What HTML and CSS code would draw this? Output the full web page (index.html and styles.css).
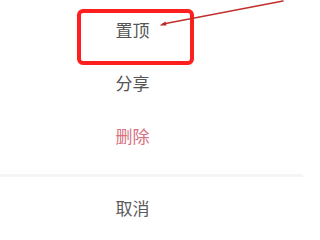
FILE: index.html
```html
<!DOCTYPE html>
<html lang="zh">
<head>
<meta charset="utf-8">
<link rel="stylesheet" href="styles.css">
</head>
<body>
<div class="sheet">
  <ul class="menu">
    <li class="item">置顶</li>
    <li class="item">分享</li>
    <li class="item danger">删除</li>
  </ul>
  <div class="divider"></div>
  <div class="item cancel">取消</div>
  <div class="highlight"></div>
  <svg class="arrow" width="303" height="40" viewBox="0 0 303 40">
    <path d="M283 1 L163 24" stroke="#c0302c" stroke-width="1.6" stroke-linecap="round" fill="none"/>
    <path d="M159.5 25.5 L165.5 21.5 L166.5 25.5 Z" fill="#b82a28"/>
  </svg>
</div>
</body>
</html>
```
FILE: styles.css
```css
html, body {
  margin: 0;
  padding: 0;
  background: #ffffff;
}
.sheet {
  position: relative;
  width: 303px;
  height: 234px;
  overflow: hidden;
  font-family: "Noto Sans CJK SC", "Noto Sans", sans-serif;
}
.menu {
  list-style: none;
  margin: 0;
  padding: 3px 0 12px 0;
}
.item {
  width: 265px;
  height: 53px;
  display: flex;
  align-items: center;
  justify-content: center;
  font-size: 17px;
  color: #555555;
}
.danger {
  color: #d8707f;
}
.divider {
  height: 3px;
  background: #f5f5f5;
}
.cancel {
  height: 60px;
  color: #5a5a5a;
}
.highlight {
  position: absolute;
  left: 77px;
  top: 9px;
  width: 109px;
  height: 48px;
  border: 4px solid #ff1f1f;
  border-radius: 6px;
}
.arrow {
  position: absolute;
  left: 0;
  top: 0;
}
```
